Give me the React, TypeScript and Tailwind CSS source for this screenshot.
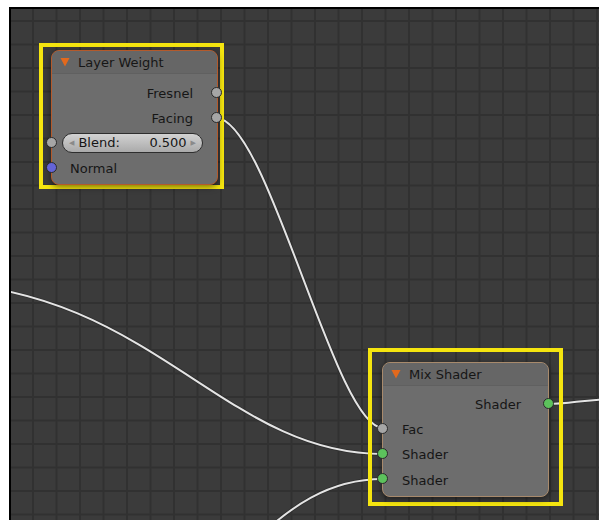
import type { ReactNode } from 'react';

const font = { fontFamily: '"DejaVu Sans", "Liberation Sans", sans-serif' };

const wires = [
  'M216,118 C268,118 335,428 383,428',
  'M-80,282 C150,282 220,454 383,454',
  'M245,550 C290,505 330,479 383,479',
  'M547,404 C575,404 580,399 620,399',
];

function Socket({ color, className }: { color: string; className: string }) {
  return (
    <span
      className={`absolute w-[11px] h-[11px] rounded-full border border-[#2a2a2a] ${className}`}
      style={{ background: color }}
    />
  );
}

function Header({ title }: { title: string }) {
  return (
    <div className="h-[23px] flex items-center pl-[8px] gap-[8px] bg-[#666666] rounded-t-[7px] border-b border-[#606060]">
      <svg width="10" height="10" viewBox="0 0 10 10">
        <polygon points="0.5,1 9.5,1 5,9.5" fill="#e2691d" />
      </svg>
      <span className="text-[13px] text-[#161616] leading-none">{title}</span>
    </div>
  );
}

function Node({ title, border, children }: { title: string; border: string; children: ReactNode }) {
  return (
    <div
      className={`relative w-[167px] h-[135px] rounded-[8px] border bg-[#6d6d6d] shadow-[0_2px_6px_rgba(0,0,0,0.5)] ${border}`}
    >
      <Header title={title} />
      {children}
    </div>
  );
}

export default function App() {
  return (
    <div className="w-[599px] h-[520px] bg-white pl-[9px] pt-[7px] overflow-hidden" style={font}>
      <div className="relative h-full border-l-2 border-t-2 border-black bg-[#3b3b3b] bg-[linear-gradient(to_right,#313131_1.5px,transparent_1.5px),linear-gradient(to_bottom,#313131_1.5px,transparent_1.5px)] bg-[size:23.5px_23.5px] bg-[position:21px_11px] overflow-hidden">
        <svg className="absolute inset-0" width="588" height="511" viewBox="11 9 588 511">
          <g fill="none" stroke="#202020" strokeWidth="3.5" strokeOpacity="0.45">
            {wires.map((d) => (
              <path key={d} d={d} />
            ))}
          </g>
          <g fill="none" stroke="#e4e4e4" strokeWidth="2">
            {wires.map((d) => (
              <path key={d} d={d} />
            ))}
          </g>
        </svg>

        {/* Layer Weight */}
        <div className="absolute left-[28px] top-[34px] w-[185px] h-[146px] border-4 border-[#f5e50f] pl-[8px] pt-[3px]">
          <Node title="Layer Weight" border="border-[#b45a2c]">
            <div className="pt-[7px] pr-[24px] text-[13px] text-[#161616]">
              <div className="relative h-[26px] flex items-center justify-end">
                Fresnel
                <Socket color="#a6a6a6" className="right-[-29px] top-[6px]" />
              </div>
              <div className="relative h-[24px] flex items-center justify-end">
                Facing
                <Socket color="#a6a6a6" className="right-[-29px] top-[5px]" />
              </div>
            </div>
            <div className="relative mt-[2px] ml-[10px] w-[141px] h-[20px] rounded-full border border-[#2e2e2e] bg-[linear-gradient(to_bottom,#d2d2d2,#aaaaaa)] flex items-center px-[6px] text-[13px] text-[#161616]">
              <span className="text-[7px] text-[#8a8a8a]">◀</span>
              <span className="ml-[4px]">Blend:</span>
              <span className="ml-auto mr-[4px]">0.500</span>
              <span className="text-[7px] text-[#8a8a8a]">▶</span>
              <Socket color="#a6a6a6" className="left-[-17px] top-[3px]" />
            </div>
            <div className="relative mt-[3px] h-[26px] flex items-center pl-[18px] text-[13px] text-[#161616]">
              Normal
              <Socket color="#6464d8" className="left-[-6px] top-[6px]" />
            </div>
          </Node>
        </div>

        {/* Mix Shader */}
        <div className="absolute left-[357px] top-[339px] w-[195px] h-[158px] border-4 border-[#f5e50f] pl-[10px] pt-[10px]">
          <Node title="Mix Shader" border="border-[#a88a6c]">
            <div className="pt-[6px] text-[13px] text-[#161616]">
              <div className="relative h-[26px] flex items-center justify-end pr-[27px]">
                Shader
                <Socket color="#5cc25c" className="right-[-6px] top-[6px]" />
              </div>
              <div className="relative h-[24px] flex items-center pl-[19px]">
                Fac
                <Socket color="#a6a6a6" className="left-[-6px] top-[5px]" />
              </div>
              <div className="relative h-[26px] flex items-center pl-[19px]">
                Shader
                <Socket color="#5cc25c" className="left-[-6px] top-[6px]" />
              </div>
              <div className="relative h-[26px] flex items-center pl-[19px]">
                Shader
                <Socket color="#5cc25c" className="left-[-6px] top-[5px]" />
              </div>
            </div>
          </Node>
        </div>
      </div>
    </div>
  );
}
